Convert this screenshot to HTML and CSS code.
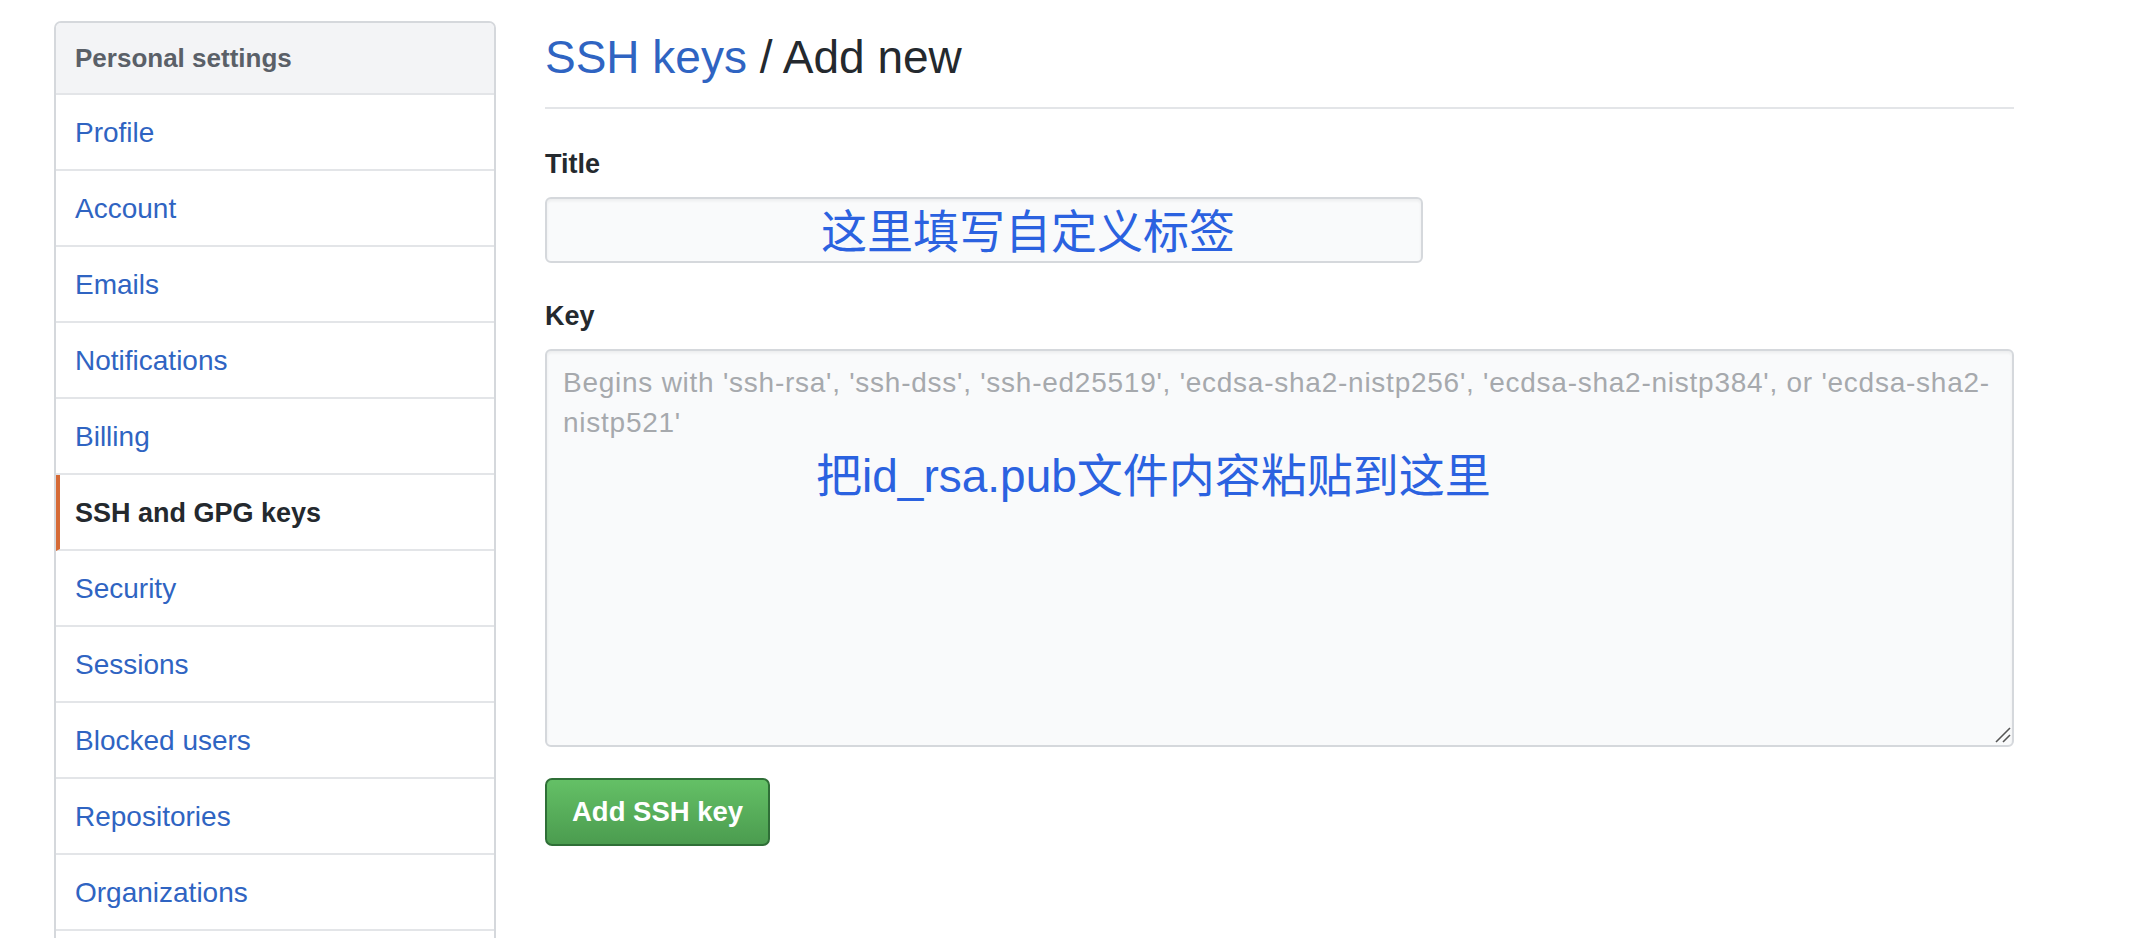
FILE: index.html
```html
<!DOCTYPE html>
<html lang="en">
<head>
<meta charset="utf-8">
<title>SSH keys / Add new</title>
<link rel="stylesheet" href="styles.css">
</head>
<body>
<div class="page">
  <nav class="menu">
    <div class="menu-heading">Personal settings</div>
    <a class="menu-item" href="#">Profile</a>
    <a class="menu-item" href="#">Account</a>
    <a class="menu-item" href="#">Emails</a>
    <a class="menu-item" href="#">Notifications</a>
    <a class="menu-item" href="#">Billing</a>
    <a class="menu-item selected" href="#">SSH and GPG keys</a>
    <a class="menu-item" href="#">Security</a>
    <a class="menu-item" href="#">Sessions</a>
    <a class="menu-item" href="#">Blocked users</a>
    <a class="menu-item" href="#">Repositories</a>
    <a class="menu-item" href="#">Organizations</a>
  </nav>
  <main class="main">
    <div class="subhead">
      <h2 class="subhead-heading"><a href="#" class="crumb">SSH keys</a> / Add new</h2>
    </div>
    <form class="form">
      <div class="form-group first">
        <label class="label">Title</label>
        <div class="input">
          <span class="note note-title">这里填写自定义标签</span>
        </div>
      </div>
      <div class="form-group">
        <label class="label">Key</label>
        <div class="textarea">
          <div class="placeholder">Begins with 'ssh-rsa', 'ssh-dss', 'ssh-ed25519', 'ecdsa-sha2-nistp256', 'ecdsa-sha2-nistp384', or 'ecdsa-sha2-<br>nistp521'</div>
          <div class="note note-key">把id_rsa.pub文件内容粘贴到这里</div>
          <svg class="grip" width="18" height="18" viewBox="0 0 18 18">
            <line x1="2" y1="16" x2="16" y2="2" stroke="#555" stroke-width="1.6"/>
            <line x1="9" y1="16" x2="16" y2="9" stroke="#555" stroke-width="1.6"/>
          </svg>
        </div>
      </div>
      <div class="actions">
        <button type="button" class="btn-primary">Add SSH key</button>
      </div>
    </form>
  </main>
</div>
</body>
</html>
```

FILE: styles.css
```css
html, body {
  margin: 0;
  padding: 0;
  background: #ffffff;
}

body {
  font-family: "Liberation Sans", Arial, "Noto Sans CJK SC", sans-serif;
  color: #24292e;
}

.page {
  display: flex;
  align-items: flex-start;
  gap: 49px;
  padding: 21px 0 0 54px;
  height: 100vh;
  box-sizing: border-box;
  overflow: hidden;
}

/* ---------- sidebar ---------- */
.menu {
  width: 442px;
  flex: none;
  box-sizing: border-box;
  border: 2px solid #d5d8dc;
  border-radius: 7px;
  background: #fff;
  display: flex;
  flex-direction: column;
  padding-bottom: 60px;
}

.menu-heading {
  height: 70px;
  line-height: 70px;
  padding-left: 19px;
  background: #f3f4f6;
  border-bottom: 2px solid #e3e5e8;
  border-radius: 5px 5px 0 0;
  font-size: 26px;
  font-weight: bold;
  color: #5a6068;
}

.menu-item {
  display: block;
  height: 76px;
  box-sizing: border-box;
  padding: 2px 0 0 19px;
  line-height: 72px;
  border-bottom: 2px solid #e3e5e8;
  font-size: 28px;
  color: #2f64c2;
  text-decoration: none;
}

.menu-item.selected {
  border-left: 4px solid #d56a36;
  padding-left: 15px;
  font-weight: bold;
  font-size: 27px;
  color: #24292e;
}

/* ---------- main ---------- */
.main {
  width: 1469px;
  flex: none;
}

.subhead {
  padding: 7px 0 21px;
  border-bottom: 2px solid #e3e5e8;
}

.subhead-heading {
  margin: 0;
  font-size: 46px;
  line-height: 58px;
  font-weight: normal;
  color: #24292e;
}

.crumb {
  color: #2f64c2;
  text-decoration: none;
}

.form-group {
  margin-top: 36px;
}

.form-group.first {
  margin-top: 38px;
}

.label {
  display: block;
  font-size: 27px;
  line-height: 34px;
  font-weight: bold;
  color: #24292e;
  margin-bottom: 16px;
}

.input {
  width: 878px;
  height: 66px;
  box-sizing: border-box;
  border: 2px solid #d5d8dc;
  border-radius: 6px;
  background: #f9fafb;
  box-shadow: inset 0 2px 3px rgba(27, 31, 35, 0.06);
  display: flex;
  align-items: center;
  padding-left: 274px;
}

.note {
  font-family: "Liberation Sans", Arial, "Noto Sans CJK SC", sans-serif;
  font-size: 46px;
  color: #2b62e0;
  white-space: nowrap;
}

.note-title {
  line-height: 1;
  margin-top: 3px;
}

.textarea {
  position: relative;
  height: 398px;
  box-sizing: border-box;
  border: 2px solid #d5d8dc;
  border-radius: 6px;
  background: #f9fafb;
  box-shadow: inset 0 2px 3px rgba(27, 31, 35, 0.06);
  padding: 12px 16px;
}

.placeholder {
  font-size: 28px;
  line-height: 40px;
  letter-spacing: 0.75px;
  color: #a6a9ad;
  white-space: nowrap;
}

.note-key {
  margin: 5px 0 0 253px;
  line-height: 56px;
}

.grip {
  position: absolute;
  right: 0;
  bottom: 1px;
}

.actions {
  margin-top: 31px;
}

.btn-primary {
  display: inline-block;
  height: 68px;
  padding: 0 25px;
  box-sizing: border-box;
  border: 2px solid #2f6f37;
  border-radius: 7px;
  background: linear-gradient(#64c066, #4b9c4f);
  color: #ffffff;
  font-family: "Liberation Sans", Arial, sans-serif;
  font-size: 27.5px;
  font-weight: bold;
  line-height: 64px;
  cursor: pointer;
}
```
